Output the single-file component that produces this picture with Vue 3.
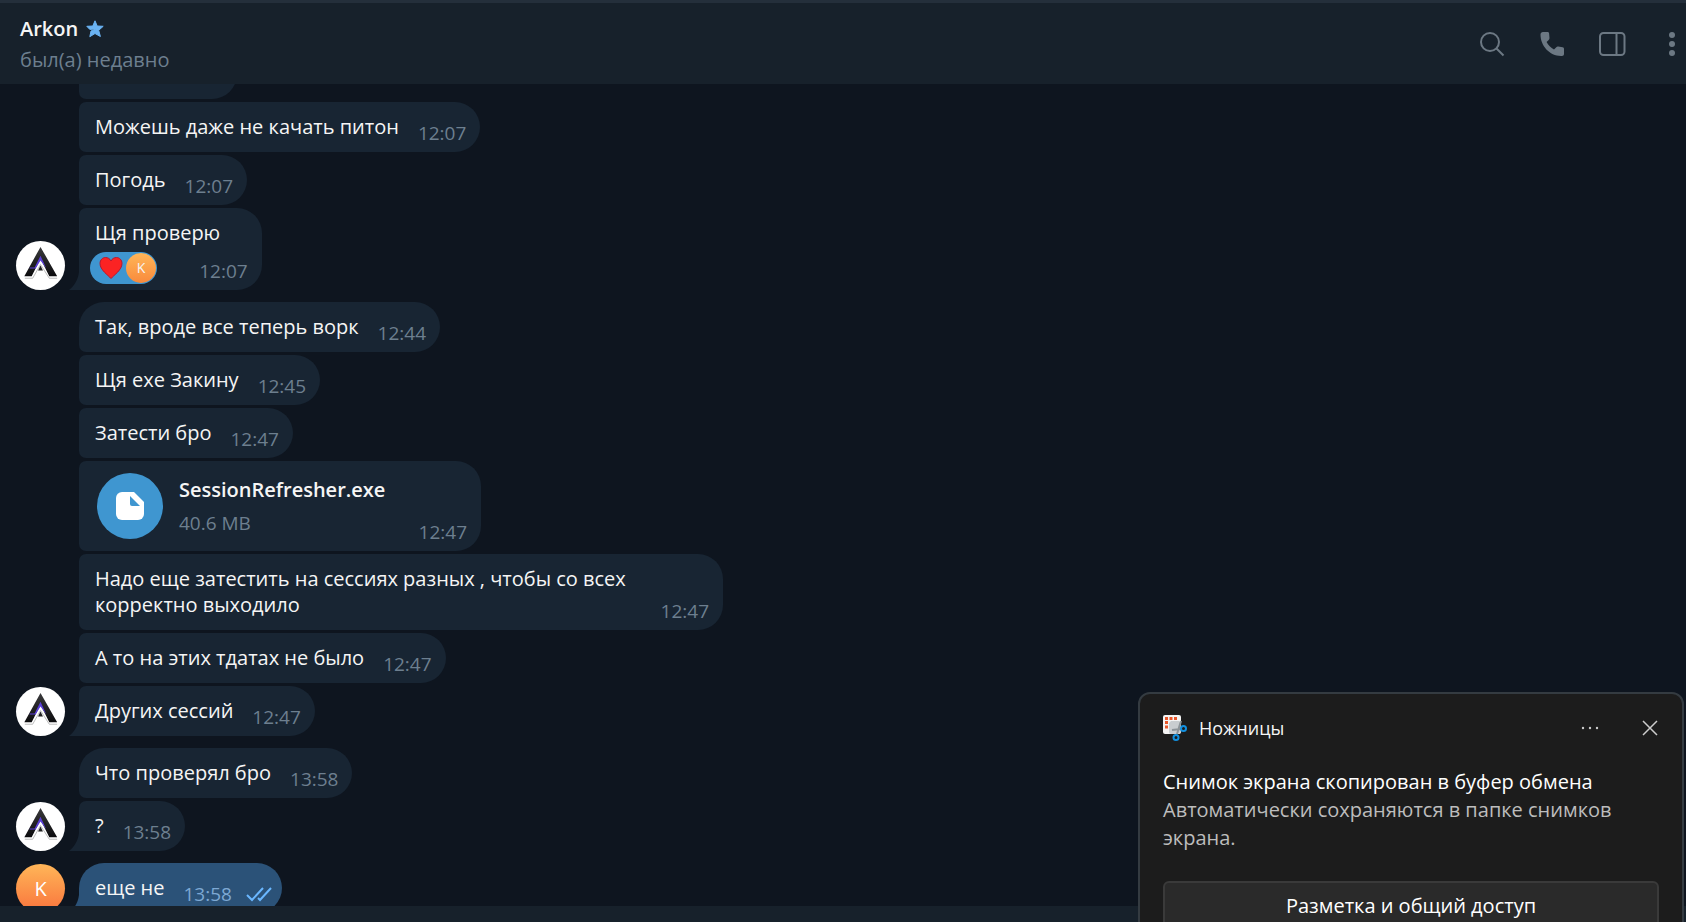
<script setup>
const groups = [
  {
    avatar: 'arkon',
    continued: true,
    messages: [
      { text: 'Можешь даже не качать питон', time: '12:07' },
      { text: 'Погодь', time: '12:07' },
      { text: 'Щя проверю', time: '12:07', reaction: 'K' },
    ],
  },
  {
    avatar: 'arkon',
    messages: [
      { text: 'Так, вроде все теперь ворк', time: '12:44' },
      { text: 'Щя ехе Закину', time: '12:45' },
      { text: 'Затести бро', time: '12:47' },
      { file: 'SessionRefresher.exe', size: '40.6 MB', time: '12:47' },
      { text: 'Надо еще затестить на сессиях разных , чтобы со всех корректно выходило', time: '12:47', long: true },
      { text: 'А то на этих тдатах не было', time: '12:47' },
      { text: 'Других сессий', time: '12:47' },
    ],
  },
  {
    avatar: 'arkon',
    messages: [
      { text: 'Что проверял бро', time: '13:58' },
      { text: '?', time: '13:58' },
    ],
  },
  { avatar: 'K', own: true, messages: [{ text: 'еще не', time: '13:58', read: true }] },
]
</script>

<template>
  <div class="app">
    <header class="header">
      <div class="peer">
        <h1 class="name">
          Arkon
          <svg class="star" viewBox="0 0 18 18" aria-hidden="true">
            <path d="M9 .8 11.2 6l6 .3-4.500 4 1.700 6.200L9 13.500l-5.200 3.200L5 11l4.600-2L3.800 9.400.8 6.300 6.800 6Z" fill="#6ab3f3" stroke="#6ab3f3" stroke-width="1" stroke-linejoin="round" />
          </svg>
        </h1>
        <p class="status">был(а) недавно</p>
      </div>
      <nav class="actions">
        <button class="icon-btn" aria-label="Поиск">
          <svg viewBox="0 0 28 28"><circle cx="12" cy="12" r="9" /><path d="m18.500 18.500 7 7" /></svg>
        </button>
        <button class="icon-btn" aria-label="Позвонить">
          <svg viewBox="0 0 28 28"><path class="solid" d="M5 2h4.500c1 0 1.500.5 1.600 1.500l.4 4.500c0 .8-.2 1.400-.8 1.900L8.600 12c1.600 3.200 4.200 5.800 7.400 7.400l2.300-2.200c.5-.6 1.100-.8 1.900-.7l4.400.7c1 .2 1.400.8 1.400 1.700v5c0 1.200-.8 2-2 2C12 26.500 2.500 16 2.500 4.500 2.500 3 3.500 2 5 2Z" /></svg>
        </button>
        <button class="icon-btn" aria-label="Боковая панель">
          <svg viewBox="0 0 28 28"><rect x="2" y="3" width="24.500" height="22" rx="3.500" /><path d="M18.500 3v22" /></svg>
        </button>
        <button class="icon-btn more" aria-label="Меню">
          <svg viewBox="0 0 28 28"><g class="solid"><circle cx="14" cy="5" r="3" /><circle cx="14" cy="14" r="3" /><circle cx="14" cy="23" r="3" /></g></svg>
        </button>
      </nav>
    </header>

    <main class="chat">
      <div class="history">
        <section v-for="(g, gi) in groups" :key="gi" class="group" :class="{ own: g.own }">
          <div v-if="g.avatar === 'arkon'" class="avatar light">
            <svg viewBox="0 0 50 50" aria-hidden="true">
              <defs>
                <linearGradient id="mark" x1="0" y1="0" x2="0" y2="1">
                  <stop offset="0" stop-color="#3a3a3c" /><stop offset="1" stop-color="#0c0c0e" />
                </linearGradient>
              </defs>
              <path d="M9 38h8l8-14 9 14h8" fill="none" stroke="#bbb" stroke-width="1" />
              <path d="M25 6 42 36h-8L25 18l-9 18H8.500Z" fill="url(#mark)" />
              <path d="m25 15 6 13-6-8-5 8h-6v-1h5Z" fill="#5b3fd6" />
              <path d="m25 25 2.500 5h-5Z" fill="#222" />
            </svg>
          </div>
          <div v-else class="avatar letter">{{ g.avatar }}</div>

          <div class="stack">
            <div v-if="g.continued" class="bubble cut"></div>
            <article
              v-for="(m, mi) in g.messages"
              :key="mi"
              class="bubble"
              :class="{ first: mi === 0 && !g.continued, last: mi === g.messages.length - 1, long: m.long, doc: m.file, reacted: m.reaction }"
            >
              <svg v-if="mi === g.messages.length - 1" class="tail" viewBox="0 0 10 18" aria-hidden="true">
                <path d="M10 0C9 8 5 14 0 18h10Z" />
              </svg>
              <template v-if="m.file">
                <a class="file-icon" href="#" :aria-label="m.file">
                  <svg viewBox="0 0 28 28">
                    <path d="M6 0h12l10 10v12a6 6 0 0 1-6 6H6a6 6 0 0 1-6-6V6a6 6 0 0 1 6-6Z" fill="#fff" />
                    <path d="M14 4v8a2 2 0 0 0 2 2h8Z" fill="#3f96d0" />
                  </svg>
                </a>
                <div class="file-info">
                  <strong>{{ m.file }}</strong>
                  <span>{{ m.size }}</span>
                </div>
              </template>
              <div v-else class="body">
                <p>{{ m.text }}</p>
                <button v-if="m.reaction" class="reaction" aria-label="Реакция: сердце">
                  <svg viewBox="0 0 24 24" aria-hidden="true">
                    <path d="M12 22.500C9 19 1 14 1 7.500 1 4 3.500 1.500 6.500 1.500c2.300 0 4.500 1.200 5.500 3.500 1-2.300 3.200-3.500 5.500-3.500C20.500 1.500 23 4 23 7.500 23 14 15 19 12 22.500Z" fill="#fb2323" stroke="#b8172c" />
                  </svg>
                  <span>{{ m.reaction }}</span>
                </button>
              </div>
              <div class="meta">
                <time>{{ m.time }}</time>
                <svg v-if="m.read" viewBox="0 0 26 16" role="img" aria-label="Прочитано">
                  <path d="m1 9 5 5L17 2M12 12l2 2L25 2" />
                </svg>
              </div>
            </article>
          </div>
        </section>
      </div>
    </main>
    <footer class="composer"></footer>

    <aside class="toast" role="status">
      <div class="toast-head">
        <svg class="snip" viewBox="0 0 24 26" aria-hidden="true">
          <rect x="0" y="0" width="18" height="19" rx="2" fill="#f4f4f4" />
          <path d="M8 6h8l2 2v9l-3 2H8a2 2 0 0 1-2-2V8Z" fill="#c9cdd0" />
          <path d="M2 3.500h13M3.500 6v9" stroke="#e8562a" stroke-width="3" stroke-dasharray="3 1.500" fill="none" />
          <path d="m18 6-4 13M9 15l9-1" stroke="#8d9499" stroke-width="2" />
          <circle cx="20.500" cy="13.500" r="2.500" fill="none" stroke="#1290df" stroke-width="2" />
          <circle cx="13" cy="22.500" r="2.500" fill="none" stroke="#1290df" stroke-width="2" />
        </svg>
        <span class="toast-app">Ножницы</span>
        <button class="toast-btn" aria-label="Параметры">
          <svg viewBox="0 0 18 18"><g fill="#ccc"><circle cx="2" cy="9" r="1.200" /><circle cx="9" cy="9" r="1.200" /><circle cx="16" cy="9" r="1.200" /></g></svg>
        </button>
        <button class="toast-btn" aria-label="Закрыть">
          <svg viewBox="0 0 18 18"><path d="m2 2 14 14M16 2 2 16" stroke="#ccc" stroke-width="1.500" /></svg>
        </button>
      </div>
      <div class="toast-text">
        <p class="toast-title">Снимок экрана скопирован в буфер обмена</p>
        <p>Автоматически сохраняются в папке снимков экрана.</p>
      </div>
      <button class="share">Разметка и общий доступ</button>
    </aside>
  </div>
</template>

<style>
body {
  margin: 0;
  background: #0e151f;
}
</style>

<style scoped>
.app {
  position: relative;
  display: flex;
  flex-direction: column;
  height: 100vh;
  overflow: hidden;
  background: #0e151f;
  color: #f5f5f5;
  font: 20px/26px "Open Sans", "Noto Sans", sans-serif;
}
p, h1 { margin: 0; }
button { padding: 0; border: 0; background: none; font: inherit; color: inherit; }
svg { display: block; flex: none; }

.header {
  box-sizing: border-box;
  display: flex;
  flex: none;
  justify-content: space-between;
  align-items: center;
  height: 84px;
  padding: 0 0 0 20px;
  border-top: 3px solid #242f3b;
  background: #17212b;
}
.name {
  display: flex;
  align-items: center;
  gap: 8px;
  font-size: 20px;
  line-height: 28px;
  font-weight: 600;
}
.star { width: 18px; height: 18px; }
.status { margin-top: 4px; line-height: 26px; color: #6d7f8f; }
.actions { display: flex; align-items: center; gap: 32px; }
.icon-btn svg {
  width: 28px;
  height: 28px;
  fill: none;
  stroke: #6c7883;
  stroke-width: 2;
}
.icon-btn .solid { fill: #6c7883; stroke: none; }

.chat {
  display: flex;
  flex: 1;
  flex-direction: column;
  justify-content: flex-end;
  min-height: 0;
  overflow: hidden;
}
.history {
  display: flex;
  flex-direction: column;
  gap: 12px;
  margin-bottom: -7px;
}
.group {
  display: flex;
  align-items: flex-end;
  gap: 14px;
  padding-left: 16px;
}
.avatar { flex: none; width: 49px; height: 49px; border-radius: 50%; overflow: hidden; }
.light { background: #fff; }
.letter {
  background: linear-gradient(#ffb658, #f9733c);
  color: #fff;
  line-height: 49px;
  text-align: center;
}
.stack { display: flex; flex-direction: column; align-items: flex-start; gap: 3px; }
.bubble {
  position: relative;
  box-sizing: border-box;
  display: flex;
  align-items: flex-end;
  gap: 19px;
  max-width: 644px;
  min-height: 50px;
  padding: 12px 14px 12px 16px;
  border-radius: 7px 25px 25px 7px;
  background: #182533;
}
.cut { width: 158px; }
.first { border-top-left-radius: 25px; }
.last { border-bottom-left-radius: 0; }
.tail { position: absolute; right: 100%; bottom: 0; width: 10px; height: 18px; fill: #182533; }
.meta { display: flex; align-items: center; gap: 14px; margin-bottom: -6px; color: #6d7f8f; font-size: 19px; }
.meta svg { width: 26px; height: 16px; fill: none; stroke: #6ab7ff; stroke-width: 2; }
.long .meta { position: absolute; right: 14px; bottom: 12px; }
.reacted { padding-bottom: 6px; }
.reacted .meta { margin-bottom: 0; }
.reaction {
  display: flex;
  align-items: center;
  gap: 3px;
  margin: 6px 0 0 -5px;
  padding: 1px 1px 1px 9px;
  border-radius: 17px;
  background: #3f96d0;
}
.reaction svg { width: 24px; height: 24px; }
.reaction span {
  width: 30px;
  height: 30px;
  border-radius: 50%;
  background: linear-gradient(#ffb658, #f98a3c);
  font-size: 14px;
  line-height: 30px;
}
.reacted .body { margin-right: -40px; }
.doc { width: 402px; padding: 12px 14px 12px 18px; gap: 16px; }
.file-icon {
  display: grid;
  place-items: center;
  width: 66px;
  height: 66px;
  border-radius: 50%;
  background: #3f96d0;
}
.file-icon svg { width: 28px; height: 28px; }
.file-info { display: flex; flex: 1; flex-direction: column; gap: 7px; align-self: center; }
.file-info strong { font-weight: 600; }
.file-info span { color: #6d7f8f; font-size: 19px; }
.own .bubble { background: #2b5278; padding-right: 10px; }
.own .tail { fill: #2b5278; }
.own .meta { color: #7da8d3; }

.composer { flex: none; height: 16px; background: #17212b; }

.toast {
  position: absolute;
  top: 692px;
  right: 2px;
  box-sizing: border-box;
  width: 546px;
  padding: 16px 23px 20px;
  border: 2px solid #343b41;
  border-radius: 12px;
  background: #1c1c1c;
  font-size: 20px;
  line-height: 28px;
}
.toast-head { display: flex; align-items: center; height: 36px; font-size: 18px; }
.snip { width: 24px; height: 26px; }
.toast-app { flex: 1; margin-left: 12px; }
.toast-btn { margin-left: 42px; }
.toast-btn svg { width: 18px; height: 18px; }
.toast-text { margin-top: 22px; color: #bdbdbd; }
.toast-title { color: #fff; }
.share {
  width: 100%;
  height: 50px;
  margin-top: 29px;
  border: 2px solid #3a3a3a;
  border-radius: 6px;
  background: #2a2a2a;
  color: #fff;
}
</style>
